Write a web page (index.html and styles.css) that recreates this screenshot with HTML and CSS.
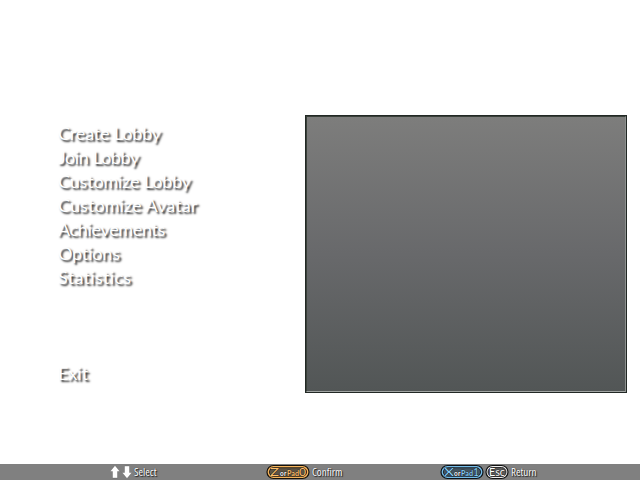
FILE: index.html
```
<!DOCTYPE html>
<html lang="en">
<head>
<meta charset="utf-8">
<title>Main Menu</title>
<link rel="stylesheet" href="styles.css">
</head>
<body>
<main class="screen">
  <nav class="menu">
    <ul class="menu-list">
      <li class="tight">Create Lobby</li>
      <li class="tighter">Join Lobby</li>
      <li class="tight">Customize Lobby</li>
      <li class="loose">Customize Avatar</li>
      <li class="tighter">Achievements</li>
      <li class="tight">Options</li>
      <li class="wide">Statistics</li>
      <li class="exit">Exit</li>
    </ul>
  </nav>
  <section class="panel"><div class="panel-inner"></div></section>
</main>
<footer class="help">
  <div class="hint hint-select">
    <svg class="arrows" width="22" height="14" viewBox="0 0 22 14">
      <path d="M5 .5 10 6.5H7.5V13H2.5V6.5H0Z M17 13.5 12 7.5H14.5V1h5v6.5h2.5Z" fill="#fff" stroke="#444" stroke-width=".3"/>
    </svg>
    <span class="label">Select</span>
  </div>
  <div class="hint hint-confirm">
    <svg class="key" width="44" height="16" viewBox="0 0 44 16">
      <rect x="1" y="1.5" width="42" height="13" rx="6.5" fill="#f5b45c" stroke="#16120c" stroke-width="1.2"/>
      <rect x="3.4" y="3.7" width="37.2" height="8.6" rx="4.3" fill="#5c5344" stroke="#16120c" stroke-width=".8"/>
      <g class="key-text orange">
        <text x="4" y="12" font-size="12" textLength="9" lengthAdjust="spacingAndGlyphs">Z</text>
        <text class="or" x="14" y="12" font-size="6.5" textLength="6.5">or</text>
        <text class="pad" x="21" y="12" font-size="8" textLength="12" lengthAdjust="spacingAndGlyphs">Pad</text>
        <text x="33" y="12" font-size="12" textLength="7" lengthAdjust="spacingAndGlyphs">0</text>
      </g>
    </svg>
    <span class="label">Confirm</span>
  </div>
  <div class="hint hint-return">
    <svg class="key" width="44" height="16" viewBox="0 0 44 16">
      <rect x="1" y="1.5" width="42" height="13" rx="6.5" fill="#75bce8" stroke="#0c1218" stroke-width="1.2"/>
      <rect x="3.4" y="3.7" width="37.2" height="8.6" rx="4.3" fill="#435460" stroke="#0c1218" stroke-width=".8"/>
      <g class="key-text blue">
        <text x="4" y="12" font-size="12" textLength="10" lengthAdjust="spacingAndGlyphs">X</text>
        <text class="or" x="14" y="12" font-size="6.5" textLength="6.5">or</text>
        <text class="pad" x="21" y="12" font-size="8" textLength="12" lengthAdjust="spacingAndGlyphs">Pad</text>
        <text x="33" y="12" font-size="12" textLength="6" lengthAdjust="spacingAndGlyphs">1</text>
      </g>
    </svg>
    <svg class="key esc" width="24" height="16" viewBox="0 0 24 16">
      <rect x="1" y="1.5" width="22" height="13" rx="6.5" fill="#eee" stroke="#111" stroke-width="1.2"/>
      <rect x="3" y="3.5" width="18" height="9" rx="4.5" fill="#5a5a5a" stroke="#111" stroke-width=".8"/>
      <g class="key-text white">
        <text x="4" y="12" font-size="11" textLength="16" lengthAdjust="spacingAndGlyphs">Esc</text>
      </g>
    </svg>
    <span class="label">Return</span>
  </div>
</footer>
</body>
</html>
```
FILE: styles.css
```
* { box-sizing: border-box; }
body {
  margin: 0;
  width: 640px;
  height: 480px;
  display: flex;
  flex-direction: column;
  overflow: hidden;
  background: #fff;
  font-family: Lato, "Open Sans", sans-serif;
}
.screen { display: flex; flex: 1; padding: 115px 13px 0 0; }
.menu { width: 305px; padding: 6px 0 0 58px; }
.menu-list {
  margin: 0;
  padding: 0;
  list-style: none;
  font-size: 18px;
  font-weight: 400;
  line-height: 24px;
  color: #fff;
  white-space: nowrap;
  text-shadow: 2px 2px 2px rgba(0, 0, 0, .85);
}
.tight { letter-spacing: -.17px; }
.tighter { letter-spacing: -.35px; }
.loose { letter-spacing: .07px; }
.wide { letter-spacing: .3px; }
.exit { margin-top: 72px; }
.panel {
  width: 322px;
  height: 278px;
  padding: 1px;
  background: #222825;
}
.panel-inner {
  height: 100%;
  border: 1px solid;
  border-color: #394039 #8c908e #a0a4a2 #394039;
  background: linear-gradient(#7d7d7c, #68696b 50%, #525656);
}
.help {
  display: flex;
  height: 16px;
  background: #808080;
  color: #fff;
}
.hint { display: flex; align-items: center; height: 16px; }
.hint-select { width: 156px; margin-left: 110px; }
.hint-confirm { width: 174px; }
.label {
  font-family: "Open Sans", sans-serif;
  font-stretch: condensed;
  font-size: 11px;
  line-height: 16px;
  letter-spacing: 0;
  margin-left: 2px;
  text-shadow: 0 0 1px #222, 1px 1px 1px #222;
}
.esc { margin-left: 1px; }
.key-text {
  font-family: Lato, sans-serif;
  stroke: #111;
  stroke-width: .7px;
  paint-order: stroke;
}
.or { fill: #fff; font-weight: 700; }
.pad { font-weight: 700; }
.orange { fill: #ffc06a; }
.blue { fill: #83cdf8; }
.white { fill: #fff; }
```
